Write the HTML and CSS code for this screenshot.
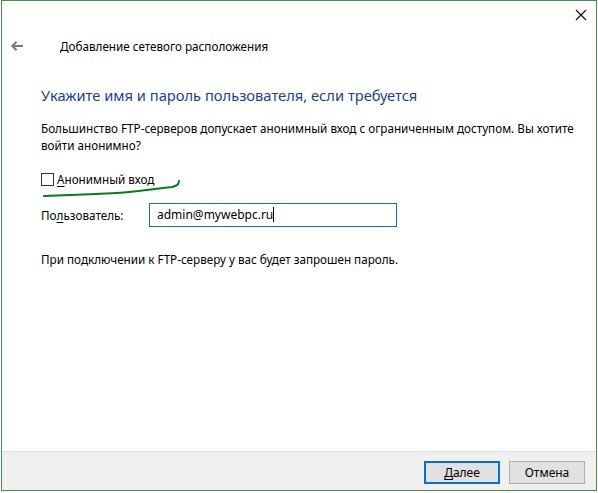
FILE: index.html
```html
<!DOCTYPE html>
<html lang="ru">
<head>
    <meta charset="UTF-8">
    <title>Добавление сетевого расположения</title>
    <link rel="stylesheet" href="styles.css">
</head>
<body>
    <div class="window">
        <div class="titlebar">
            <span class="close">
                <svg width="12" height="12" viewBox="0 0 12 12"><path d="M1 1 L11 11 M11 1 L1 11" stroke="#111" stroke-width="1.2" fill="none"/></svg>
            </span>
        </div>
        <div class="nav">
            <span class="back">
                <svg width="14" height="12" viewBox="0 0 14 12"><path d="M13 6 H2.5 M6.5 1.8 L2.3 6 L6.5 10.2" stroke="#7a7a7a" stroke-width="2" fill="none"/></svg>
            </span>
            <span class="nav-title">Добавление сетевого расположения</span>
        </div>

        <div class="content">
            <h1>Укажите имя и пароль пользователя, если требуется</h1>
            <p class="intro">Большинство FTP-серверов допускает анонимный вход с ограниченным доступом. Вы хотите войти анонимно?</p>

            <label class="check">
                <span class="box"></span>
                <span><u>А</u>нонимный вход</span>
                <svg class="scribble" width="150" height="24" viewBox="0 0 150 24"><path d="M2 20 C30 19 50 18 75 17 C95 16 110 13 130 11 C134 10 137 9 137 5" stroke="#0b7a1a" stroke-width="2" fill="none" stroke-linecap="round"/></svg>
            </label>

            <div class="field">
                <span class="field-label">По<u>л</u>ьзователь:</span>
                <div class="input">admin@mywebpc.ru<span class="caret"></span></div>
            </div>

            <p class="note">При подключении к FTP-серверу у вас будет запрошен пароль.</p>
        </div>

        <div class="footer">
            <button class="btn primary"><u>Д</u>алее</button>
            <button class="btn">Отмена</button>
        </div>
    </div>
</body>
</html>
```

FILE: styles.css
```css
html, body { margin: 0; padding: 0; background: #fff; }
body { width: 598px; height: 493px; font-family: "Noto Sans", "Open Sans", sans-serif; font-size: 11.7px; color: #000; }
u { text-decoration: underline; text-underline-offset: 2px; }

.window { margin-left: 1px; width: 594px; height: 489px; border: 1px solid #4b8b4b; background: #fff; display: flex; flex-direction: column; }

.titlebar { height: 29px; display: flex; justify-content: flex-end; }
.close { width: 12px; height: 12px; margin: 7px 9px 0 0; }

.nav { height: 32px; display: flex; align-items: center; }
.back { width: 14px; height: 12px; margin-left: 8px; display: flex; }
.nav-title { margin-left: 36px; }

.content { flex: 1; padding: 0 8px 0 39px; }
h1 { margin: 22px 0 0; font-size: 14.7px; font-weight: normal; color: #1c3e94; line-height: 22px; }
.intro { margin: 14px 0 0; line-height: 17px; }

.check { position: relative; margin-top: 17px; display: flex; align-items: center; gap: 3px; height: 16px; }
.box { width: 11px; height: 11px; border: 1px solid #333; background: #fff; }
.scribble { position: absolute; left: 1px; top: 5px; }

.field { margin-top: 16px; display: flex; align-items: center; }
.field-label { width: 108px; }
.input { width: 232px; height: 22px; border: 1px solid #1a6fb4; padding: 0 7px; line-height: 22px; font-size: 12px; }
.caret { display: inline-block; width: 1px; height: 15px; background: #000; vertical-align: -3px; }

.note { margin: 24px 0 0; }

.footer { height: 39px; border-top: 1px solid #dcdcdc; background: #f0f0f0; display: flex; justify-content: flex-end; align-items: center; gap: 9px; padding: 3px 11px 0 0; box-sizing: border-box; }
.btn { width: 76px; height: 23px; border: 1px solid #adadad; background: #e1e1e1; font-family: inherit; font-size: 12px; padding: 0; color: #000; }
.btn.primary { border: 2px solid #0a6ecf; }
```
